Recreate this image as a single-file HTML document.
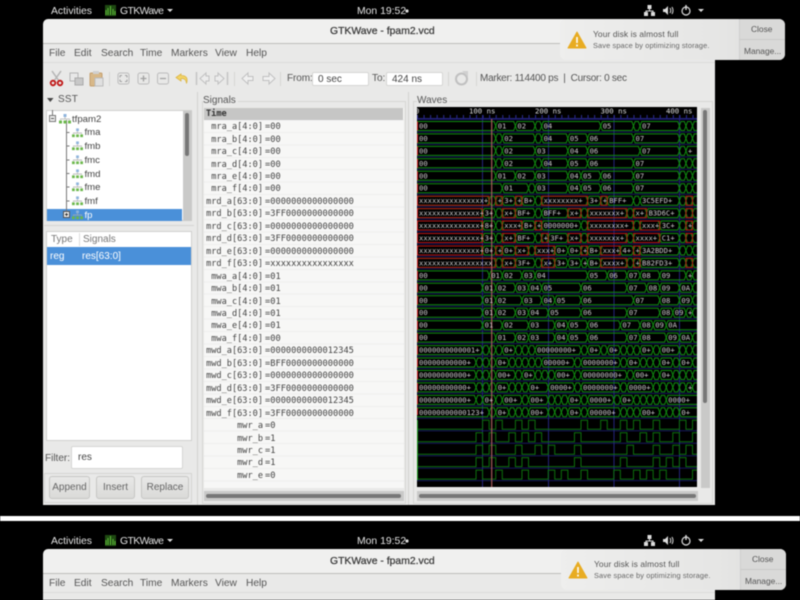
<!DOCTYPE html>
<html><head><meta charset="utf-8"><title>GTKWave</title>
<style>
html,body{margin:0;padding:0;background:#000;width:800px;height:600px;overflow:hidden}
#all{position:absolute;left:0;top:0;width:800px;height:600px;overflow:hidden;filter:blur(.5px);font-family:"Liberation Sans",sans-serif;color:#444}
.a{position:absolute;white-space:pre}
.h{position:absolute;left:0;width:800px;height:70px}
.mono{font-family:"DejaVu Sans Mono","Liberation Mono",monospace}
.menu{font-size:10.2px;top:48px;color:#555}
.tb{color:#e2e2e2;font-size:10.4px;top:5.5px}
.ent{background:#fff;border:1px solid #d6d6d4;border-radius:2px;box-sizing:border-box;color:#444}
.btn{background:linear-gradient(#e8e8e7,#dadad8);border:1px solid #c6c6c4;border-radius:3px;box-sizing:border-box;text-align:center;font-size:10px;line-height:21px;color:#666}
.tree{font-size:9.6px;color:#444}
svg{position:absolute;overflow:visible}
#w path,#w use,#w rect{vector-effect:non-scaling-stroke}
#w{fill:none;stroke:#108c10;stroke-width:1}
.m{transform:matrix(1,0,0,-1,0,9)}
.r{stroke:#b81414}
.t{font-family:"DejaVu Sans Mono","Liberation Mono",monospace;font-size:7.2px;fill:#c8c8c8;stroke:none}
</style></head><body><div id="all">

<svg width="0" height="0" style="position:absolute">
<symbol id="ti" viewBox="0 0 12 10"><rect x="4.5" y="0" width="3" height="3" fill="#8fb4dc"/><path d="M6 3V5M1.5 6V5H10.5V6" stroke="#aaa" fill="none" stroke-width=".7"/><rect x="0" y="6.5" width="3" height="3" fill="#6cb84c"/><rect x="4.5" y="6.5" width="3" height="3" fill="#6cb84c"/><rect x="9" y="6.5" width="3" height="3" fill="#6cb84c"/></symbol>
</svg>

<!-- first header -->
<div class="h" style="top:0">
<div class="a tb" style="left:51px">Activities</div>
<svg style="left:105px;top:5px" width="11" height="11"><rect width="11" height="11" fill="#1f4a12"/><path d="M1 10V5M3 10V3M5.5 10V1M8 10V4M10 10V6" stroke="#5fbf3a" stroke-width="1"/></svg>
<div class="a tb" style="left:120px;letter-spacing:-.6px">GTKWave</div>
<svg style="left:167px;top:9px" width="6" height="3"><path d="M0 0H6L3 3z" fill="#ddd"/></svg>
<div class="a tb" style="left:357px">Mon 19:52</div>
<svg style="left:405px;top:9px" width="4" height="4"><circle cx="2" cy="2" r="1.6" fill="#ddd"/></svg>
<svg style="left:644px;top:5px" width="62" height="12"><g fill="#ddd"><rect x="3.5" y="0" width="4" height="4"/><rect x="0" y="7" width="4" height="4"/><rect x="7" y="7" width="4" height="4"/></g><path d="M5.5 4V6M2 7V6H9V7" stroke="#ddd" fill="none"/><path d="M19 4h2l3-3v9l-3-3h-2z" fill="#ddd"/><path d="M26 3q1.5 2.5 0 5M28 2q2 3.5 0 7" stroke="#ddd" fill="none"/><circle cx="42" cy="6" r="4" stroke="#ddd" fill="none" stroke-width="1.2"/><path d="M42 0V5" stroke="#ddd" stroke-width="1.4"/><path d="M54 4H60L57 7z" fill="#ddd"/></svg>
<div class="a" style="left:43px;top:19px;width:672px;height:60px;background:#f0f0ef;border-radius:5px 5px 0 0"></div>
<div class="a" style="left:43px;top:43px;width:672px;height:1px;background:#bdbdbb"></div>
<div class="a" style="left:43px;top:44px;width:672px;height:30px;background:#e9e9e8"></div>
<div class="a" style="left:43px;top:62px;width:672px;height:1px;background:#dcdcda"></div>
<div class="a" style="left:330px;top:25.5px;font-size:10.4px;color:#3a3a3a;-webkit-text-stroke:.25px #3a3a3a">GTKWave - fpam2.vcd</div>
<div class="a menu" style="left:49px;top:48px">File</div><div class="a menu" style="left:74px">Edit</div><div class="a menu" style="left:101px">Search</div><div class="a menu" style="left:140px">Time</div><div class="a menu" style="left:171px">Markers</div><div class="a menu" style="left:215px">View</div><div class="a menu" style="left:246px">Help</div>
<div class="a" style="left:560px;top:19px;width:225px;height:41px;background:linear-gradient(90deg,#eeeeed,#e6e6e5 70%,#dddddc);border-radius:6px"></div>
<div class="a" style="left:739px;top:19px;width:46px;height:41px;background:#d9d9d8;border-radius:0 6px 6px 0;border-left:1px solid #cfcfce;box-sizing:border-box"></div>
<div class="a" style="left:739px;top:39px;width:46px;height:1px;background:#cacac9"></div>
<svg style="left:567px;top:31px" width="20" height="18"><path d="M10 1L19 17H1z" fill="#e8ac22" stroke="#e8ac22" stroke-linejoin="round"/><path d="M10 6V12M10 13.5V15.5" stroke="#fff" stroke-width="1.6"/></svg>
<div class="a" style="left:593px;top:29px;font-size:8.4px;color:#555;letter-spacing:.12px">Your disk is almost full</div>
<div class="a" style="left:593px;top:41px;font-size:7.4px;color:#666;letter-spacing:.12px">Save space by optimizing storage.</div>
<div class="a" style="left:751px;top:24px;font-size:8.4px;color:#555">Close</div>
<div class="a" style="left:744px;top:46px;font-size:8.4px;color:#555">Manage...</div>
</div>

<!-- main window body -->
<div class="a" style="left:43px;top:74px;width:672px;height:431px;background:#e9e9e8"></div>

<!-- toolbar -->
<svg style="left:0;top:0" width="800" height="100">
<path d="M52 71L59 81M61 71L54 81" stroke="#b4b4b4" stroke-width="1.5" fill="none"/>
<circle cx="53" cy="83" r="2.3" fill="none" stroke="#c01515" stroke-width="1.8"/><circle cx="60" cy="83" r="2.3" fill="none" stroke="#c01515" stroke-width="1.8"/>
<rect x="70" y="73" width="8" height="8" fill="#e8e8e8" stroke="#b4b4b4"/><rect x="75" y="78" width="8" height="7" fill="#c8c8c8" stroke="#aaa"/>
<rect x="90" y="73" width="12" height="13" rx="1" fill="#d8b888" stroke="#c4a070"/><rect x="93" y="71" width="6" height="3" fill="#d0d0d0"/><rect x="95" y="78" width="8" height="8" fill="#e0e0e0" stroke="#bbb"/>
<path d="M109.5 72V86M234.5 72V86M280.5 72V86M448.5 72V86M476.5 72V86" stroke="#d6d6d4"/>
<g fill="#e8e8e7" stroke="#bcbcbc"><rect x="118" y="73" width="11" height="11" rx="2"/><rect x="138" y="73" width="11" height="11" rx="2"/><rect x="157.5" y="73" width="11" height="11" rx="2"/></g>
<path d="M120 75.5h2M120 75.5v2M127 75.5h-2M127 75.5v2M120 81.5h2M120 81.5v-2M127 81.5h-2M127 81.5v-2" stroke="#a0a0a0" fill="none"/>
<path d="M140.5 78.5h6M143.5 75.5v6M160 78.5h6" stroke="#a0a0a0" stroke-width="1.3" fill="none"/>
<path d="M181 74L176 77.5L181 81V78.5Q186 78 186.5 83.5Q189 75.5 181 75.5z" fill="#f2d468" stroke="#dcb440" stroke-width=".8"/>
<path d="M196.5 72V85" stroke="#c4c4c4" stroke-width="1.5"/><path d="M200 78.5L206 73V76H209V81H206V84z" fill="#ececec" stroke="#c0c0c0"/>
<path d="M227.5 72V85" stroke="#c4c4c4" stroke-width="1.5"/><path d="M224 78.5L218 73V76H215V81H218V84z" fill="#ececec" stroke="#c0c0c0"/>
<path d="M242 78.5L248 73V76.5H253V80.5H248V84z" fill="#f0f0f0" stroke="#c0c0c0"/>
<path d="M275 78.5L269 73V76.5H263V80.5H269V84z" fill="#f0f0f0" stroke="#c0c0c0"/>
<circle cx="461.5" cy="79" r="5.5" fill="none" stroke="#c0c0c0" stroke-width="2"/><path d="M462 71H468V77z" fill="#d0d0d0"/>
</svg>
<div class="a" style="left:287px;top:73px;font-size:10px;color:#555;letter-spacing:-.1px">From:</div>
<div class="a ent" style="left:312px;top:72px;width:57px;height:14px;font-size:10px;line-height:13px;padding-left:5px">0 sec</div>
<div class="a" style="left:372px;top:73px;font-size:10px;color:#555">To:</div>
<div class="a ent" style="left:386px;top:72px;width:57px;height:14px;font-size:10px;line-height:13px;padding-left:5px">424 ns</div>
<div class="a" style="left:480px;top:73px;font-size:10px;color:#555;letter-spacing:-.26px">Marker: 114400 ps  |  Cursor: 0 sec</div>

<!-- SST -->
<svg style="left:47px;top:98px" width="7" height="4"><path d="M0 0H6.5L3.25 4z" fill="#444"/></svg>
<div class="a" style="left:58px;top:93.5px;font-size:10px;color:#555;letter-spacing:.2px">SST</div>
<div class="a" style="left:46px;top:110px;width:146px;height:111px;background:#fff;border:1px solid #d0d0ce;box-sizing:border-box"></div>
<div class="a" style="left:183px;top:111px;width:9px;height:110px;background:#c9c9c8"></div>
<div class="a" style="left:185px;top:113px;width:4px;height:43px;background:#777;border-radius:2px"></div>
<div class="a" style="left:47px;top:209px;width:135px;height:12px;background:#4a90d9"></div>
<svg style="left:46px;top:110px" width="60" height="111"><path d="M6.5 0V5M20.5 10V101M20.5 22.5h3M20.5 36h3M20.5 50h3M20.5 63.500h3M20.5 77h3M20.5 91h3" stroke="#777" fill="none"/><rect x="3.5" y="5.5" width="6" height="6" fill="#eee" stroke="#777"/><path d="M5 8.5h3" stroke="#555"/><rect x="17.5" y="101.5" width="6" height="6" fill="#eee" stroke="#555"/><path d="M19 104.5h3M20.5 103v3" stroke="#333"/></svg>
<svg style="left:59px;top:114px" width="12" height="10"><use href="#ti"/></svg>
<svg style="left:72px;top:128px" width="11" height="10"><use href="#ti"/></svg>
<svg style="left:72px;top:141px" width="11" height="10"><use href="#ti"/></svg>
<svg style="left:72px;top:155px" width="11" height="10"><use href="#ti"/></svg>
<svg style="left:72px;top:169px" width="11" height="10"><use href="#ti"/></svg>
<svg style="left:72px;top:182px" width="11" height="10"><use href="#ti"/></svg>
<svg style="left:72px;top:196px" width="11" height="10"><use href="#ti"/></svg>
<svg style="left:72px;top:210px" width="11" height="10"><use href="#ti"/></svg>
<div class="a tree" style="left:72px;top:113.5px">tfpam2</div>
<div class="a tree" style="left:84.5px;top:127px">fma</div>
<div class="a tree" style="left:84.5px;top:141px">fmb</div>
<div class="a tree" style="left:84.5px;top:155px">fmc</div>
<div class="a tree" style="left:84.5px;top:168.5px">fmd</div>
<div class="a tree" style="left:84.5px;top:182px">fme</div>
<div class="a tree" style="left:84.5px;top:196px">fmf</div>
<div class="a tree" style="left:84.5px;top:209.5px;color:#fff">fp</div>
<div class="a" style="left:44px;top:225px;width:150px;height:1px;background:#d4d4d2"></div>

<!-- Type/Signals list -->
<div class="a" style="left:46px;top:231px;width:146px;height:210px;background:#fff;border:1px solid #d0d0ce;box-sizing:border-box"></div>
<div class="a" style="left:79px;top:233px;width:1px;height:13px;background:#ddd"></div>
<div class="a" style="left:51px;top:234px;font-size:10px;color:#777">Type</div>
<div class="a" style="left:83px;top:234px;font-size:10px;color:#777">Signals</div>
<div class="a" style="left:47px;top:247px;width:144px;height:18px;background:#4a90d9"></div>
<div class="a" style="left:50px;top:251px;font-size:10px;color:#fff">reg</div>
<div class="a" style="left:82px;top:251px;font-size:10px;color:#fff">res[63:0]</div>
<div class="a" style="left:45px;top:452.5px;font-size:10px;color:#555">Filter:</div>
<div class="a ent" style="left:71px;top:446px;width:112px;height:23px;font-size:10px;line-height:22px;padding-left:6px">res</div>
<div class="a" style="left:44px;top:473px;width:148px;height:30px;border:1px solid #d4d4d2;box-sizing:border-box"></div>
<div class="a btn" style="left:49px;top:476px;width:41px;height:23px">Append</div>
<div class="a btn" style="left:96px;top:476px;width:39px;height:23px">Insert</div>
<div class="a btn" style="left:141px;top:476px;width:48px;height:23px">Replace</div>
<div class="a" style="left:197px;top:92px;width:1px;height:413px;background:#d2d2d0"></div>

<!-- Signals -->
<div class="a" style="left:202px;top:101px;width:204px;height:403px;border:1px solid #d6d6d4;box-sizing:border-box"></div>
<div class="a" style="left:203px;top:94.5px;font-size:10px;color:#555;background:#e9e9e8;padding-right:2px">Signals</div>
<div class="a" style="left:204px;top:108px;width:200px;height:380px;background:repeating-linear-gradient(#f7f7f6 0,#f7f7f6 11.45px,#eeeeed 11.45px,#eeeeed 12.45px)"></div>
<div class="a" style="left:204px;top:108px;width:199px;height:12px;background:#c6c6c5"></div>
<div class="a mono" style="left:206px;top:108px;font-size:8.6px;line-height:12.45px;color:#333;font-weight:bold">Time</div>
<div class="a mono" style="left:204px;top:121.2px;width:59px;text-align:right;font-size:8.6px;line-height:12.45px;color:#444">mra_a[4:0]
mra_b[4:0]
mra_c[4:0]
mra_d[4:0]
mra_e[4:0]
mra_f[4:0]
mrd_a[63:0]
mrd_b[63:0]
mrd_c[63:0]
mrd_d[63:0]
mrd_e[63:0]
mrd_f[63:0]
mwa_a[4:0]
mwa_b[4:0]
mwa_c[4:0]
mwa_d[4:0]
mwa_e[4:0]
mwa_f[4:0]
mwd_a[63:0]
mwd_b[63:0]
mwd_c[63:0]
mwd_d[63:0]
mwd_e[63:0]
mwd_f[63:0]
mwr_a
mwr_b
mwr_c
mwr_d
mwr_e</div>
<div class="a mono" style="left:265px;top:121.2px;font-size:8.7px;line-height:12.45px;color:#444">=00
=00
=00
=00
=00
=00
=0000000000000000
=3FF0000000000000
=0000000000000000
=3FF0000000000000
=0000000000000000
=xxxxxxxxxxxxxxxx
=01
=01
=01
=01
=01
=00
=0000000000012345
=BFF0000000000000
=0000000000000000
=3FF0000000000000
=0000000000012345
=3FF0000000000000
=0
=1
=1
=1
=0</div>
<div class="a" style="left:204px;top:491px;width:200px;height:10px;background:#c9c9c8"></div>
<div class="a" style="left:206px;top:494px;width:195px;height:4px;background:#777;border-radius:2px"></div>
<div class="a" style="left:408px;top:92px;width:1px;height:413px;background:#d2d2d0"></div>

<!-- Waves frame -->
<div class="a" style="left:413px;top:101px;width:300px;height:403px;border:1px solid #d6d6d4;box-sizing:border-box"></div>
<div class="a" style="left:417px;top:94.5px;font-size:10px;color:#555;background:#e9e9e8;padding-right:2px">Waves</div>
<div class="a" style="left:417px;top:107px;width:280px;height:380px;background:#000"></div>
<div class="a" style="left:701px;top:108px;width:9px;height:380px;background:#c9c9c8"></div>
<div class="a" style="left:703px;top:110px;width:4px;height:293px;background:#777;border-radius:2px"></div>
<div class="a" style="left:417px;top:491px;width:281px;height:10px;background:#c9c9c8"></div>
<div class="a" style="left:419px;top:494px;width:277px;height:4px;background:#777;border-radius:2px"></div>

<svg style="left:0;top:0;clip-path:inset(107px 103px 113px 417px)" width="800" height="600">
<path d="M417 119.5H697M417 132H697M417 144.4H697M417 156.9H697M417 169.3H697M417 181.8H697M417 194.2H697M417 206.7H697M417 219.1H697M417 231.6H697M417 244H697M417 256.5H697M417 268.9H697M417 281.4H697M417 293.8H697M417 306.3H697M417 318.7H697M417 331.2H697M417 343.6H697M417 356.1H697M417 368.5H697M417 381H697M417 393.4H697M417 405.9H697M417 418.3H697M417 430.8H697M417 443.2H697M417 455.7H697M417 468.1H697M417 480.6H697" stroke="#16165e"/>
<path d="M482.5 115V487M548.5 115V487M614 115V487M679.5 115V487" stroke="#24247c"/>
<path d="M417 116.5H697" stroke="#2c2c96" stroke-width="3" stroke-dasharray="1 5.56"/>
<path d="M417 118.5H697" stroke="#24247c"/>
<text class="t" y="113.5" style="font-size:7.3px;fill:#ddd"><tspan x="415">0</tspan><tspan x="469">100 ns</tspan><tspan x="535">200 ns</tspan><tspan x="600.5">300 ns</tspan><tspan x="666">400 ns</tspan></text>

<g id="w" transform="translate(417 0) scale(6.56 1)">
<g transform="translate(0 121.5)"><path id="p1" d="M0 0H11.75l.5 9H14.75l.5-9H17.75l.5 9H18.75l.5-9H27.75l.5 9H32.75l.5-9H33.75l.5 9H39.75l.5-9H40.75l.5 9H41.75l.5-9H43"/><use href="#p1" class="m"/></g>
<g transform="translate(0 133.9)"><path id="p2" d="M0 0H11.75l.5 9H12.75l.5-9H17.75l.5 9H18.75l.5-9H22.75l.5 9H25.75l.5-9H32.75l.5 9H39.75l.5-9H40.75l.5 9H41.75l.5-9H43"/><use href="#p2" class="m"/></g>
<g transform="translate(0 146.4)"><path id="p3" d="M0 0H11.75l.5 9H12.75l.5-9H17.75l.5 9H22.75l.5-9H25.75l.5 9H33.75l.5-9H39.75l.5 9H40.75l.5-9H43"/><use href="#p3" class="m"/></g>
<g transform="translate(0 158.8)"><path id="p4" d="M0 0H11.75l.5 9H12.75l.5-9H17.75l.5 9H18.75l.5-9H22.75l.5 9H25.75l.5-9H32.75l.5 9H39.75l.5-9H40.75l.5 9H41.75l.5-9H43"/><use href="#p4" class="m"/></g>
<g transform="translate(0 171.3)"><path id="p5" d="M0 0H11.75l.5 9H14.75l.5-9H17.75l.5 9H22.75l.5-9H24.75l.5 9H27.75l.5-9H32.75l.5 9H39.75l.5-9H40.75l.5 9H41.75l.5-9H43"/><use href="#p5" class="m"/></g>
<g transform="translate(0 183.7)"><path id="p6" d="M0 0H12.75l.5 9H16.75l.5-9H17.75l.5 9H22.75l.5-9H24.75l.5 9H27.75l.5-9H32.75l.5 9H39.75l.5-9H40.75l.5 9H41.75l.5-9H43"/><use href="#p6" class="m"/></g>

<g transform="translate(0 196.2)"><path id="p7" d="M0 0H10.75l.5 9H11.75l.5-9H12.75l.5 9H14.75l.5-9H15.75l.5 9H17.75l.5-9H18.75l.5 9H25.75l.5-9H27.75l.5 9H28.75l.5-9H32.75l.5 9H33.75l.5-9H39.75l.5 9H40.75l.5-9H41.75l.5 9H43"/><use href="#p7" class="m"/><g class="r"><rect width="11" height="9"/><rect x="12" width="1" height="9"/><rect x="15" width="1" height="9"/><rect x="19" width="7" height="9"/><rect x="28" width="1" height="9"/><rect x="41" width="1" height="9"/></g></g>
<g transform="translate(0 208.6)"><path id="p8" d="M0 0H9.75l.5 9H11.75l.5-9H12.75l.5 9H14.75l.5-9H17.75l.5 9H18.75l.5-9H22.75l.5 9H24.75l.5-9H25.75l.5 9H31.75l.5-9H32.75l.5 9H34.75l.5-9H39.75l.5 9H40.75l.5-9H41.75l.5 9H43"/><use href="#p8" class="m"/><g class="r"><rect width="10" height="9"/><rect x="13" width="2" height="9"/><rect x="23" width="2" height="9"/><rect x="26" width="6" height="9"/><rect x="33" width="2" height="9"/><rect x="41" width="1" height="9"/></g></g>
<g transform="translate(0 221)"><path id="p9" d="M0 0H9.75l.5 9H11.75l.5-9H12.75l.5 9H15.75l.5-9H17.75l.5 9H18.75l.5-9H24.75l.5 9H25.75l.5-9H32.75l.5 9H33.75l.5-9H36.75l.5 9H39.75l.5-9H40.75l.5 9H41.75l.5-9H43"/><use href="#p9" class="m"/><g class="r"><rect width="10" height="9"/><rect x="13" width="3" height="9"/><rect x="18" width="1" height="9"/><rect x="26" width="7" height="9"/><rect x="34" width="3" height="9"/><rect x="41" width="1" height="9"/></g></g>
<g transform="translate(0 233.5)"><path id="p10" d="M0 0H9.75l.5 9H11.75l.5-9H12.75l.5 9H14.75l.5-9H17.75l.5 9H18.75l.5-9H19.75l.5 9H22.75l.5-9H24.75l.5 9H25.75l.5-9H31.75l.5 9H32.75l.5-9H36.75l.5 9H39.75l.5-9H40.75l.5 9H41.75l.5-9H43"/><use href="#p10" class="m"/><g class="r"><rect width="10" height="9"/><rect x="13" width="2" height="9"/><rect x="19" width="1" height="9"/><rect x="23" width="2" height="9"/><rect x="26" width="6" height="9"/><rect x="33" width="4" height="9"/><rect x="41" width="1" height="9"/></g></g>
<g transform="translate(0 246)"><path id="p11" d="M0 0H9.75l.5 9H11.75l.5-9H12.75l.5 9H14.75l.5-9H16.75l.5 9H17.75l.5-9H20.75l.5 9H22.75l.5-9H24.75l.5 9H25.75l.5-9H27.75l.5 9H30.75l.5-9H32.75l.5 9H33.75l.5-9H39.75l.5 9H40.75l.5-9H41.75l.5 9H43"/><use href="#p11" class="m"/><g class="r"><rect width="10" height="9"/><rect x="12" width="1" height="9"/><rect x="15" width="2" height="9"/><rect x="18" width="3" height="9"/><rect x="25" width="1" height="9"/><rect x="28" width="3" height="9"/><rect x="33" width="1" height="9"/></g></g>
<g transform="translate(0 258.4)"><path id="p12" d="M0 0H11.75l.5 9H12.75l.5-9H14.75l.5 9H17.75l.5-9H18.75l.5 9H20.75l.5-9H22.75l.5 9H24.75l.5-9H25.75l.5 9H27.75l.5-9H31.75l.5 9H32.75l.5-9H33.75l.5 9H39.75l.5-9H40.75l.5 9H41.75l.5-9H43"/><use href="#p12" class="m"/><g class="r"><rect width="12" height="9"/><rect x="13" width="2" height="9"/><rect x="19" width="2" height="9"/><rect x="28" width="4" height="9"/><rect x="33" width="1" height="9"/><rect x="41" width="1" height="9"/></g></g>

<g transform="translate(0 270.9)"><path id="p13" d="M0 0H10.75l.5 9H12.75l.5-9H15.75l.5 9H17.75l.5-9H25.75l.5 9H28.75l.5-9H31.75l.5 9H33.75l.5-9H36.75l.5 9H40.75l.5-9H41.75l.5 9H43"/><use href="#p13" class="m"/></g>
<g transform="translate(0 283.3)"><path id="p14" d="M0 0H9.75l.5 9H11.75l.5-9H14.75l.5 9H16.75l.5-9H18.75l.5 9H24.75l.5-9H31.75l.5 9H34.75l.5-9H36.75l.5 9H39.75l.5-9H41.75l.5 9H43"/><use href="#p14" class="m"/></g>
<g transform="translate(0 295.8)"><path id="p15" d="M0 0H9.75l.5 9H11.75l.5-9H15.75l.5 9H18.75l.5-9H20.75l.5 9H24.75l.5-9H32.75l.5 9H36.75l.5-9H39.75l.5 9H41.75l.5-9H43"/><use href="#p15" class="m"/></g>
<g transform="translate(0 308.2)"><path id="p16" d="M0 0H9.75l.5 9H11.75l.5-9H14.75l.5 9H16.75l.5-9H19.75l.5 9H24.75l.5-9H31.75l.5 9H36.75l.5-9H38.75l.5 9H40.75l.5-9H41.75l.5 9H43"/><use href="#p16" class="m"/></g>
<g transform="translate(0 320.7)"><path d="M0 0H9.75l.5 9H12.75l.5-9H16.75l.5 9H20.75l.5-9H22.75l.5 9H25.75l.5-9H30.75l.5 9H33.75l.5-9H35.75l.5 9H37.75l.5-9H43M38.25 9H43"/><path d="M0 9H9.75l.5-9H12.75l.5 9H16.75l.5-9H20.75l.5 9H22.75l.5-9H25.75l.5 9H30.75l.5-9H33.75l.5 9H35.75l.5-9H37.75l.5 9"/></g>
<g transform="translate(0 333.1)"><path id="p18" d="M0 0H11.75l.5 9H14.75l.5-9H16.75l.5 9H20.75l.5-9H22.75l.5 9H25.75l.5-9H31.75l.5 9H33.75l.5-9H37.75l.5 9H39.75l.5-9H41.75l.5 9H43"/><use href="#p18" class="m"/></g>

<g transform="translate(0 345.6)"><path id="p19" d="M0 0H9.75l.5 9H10.75l.5-9H11.75l.5 9H12.75l.5-9H14.75l.5 9H15.75l.5-9H16.75l.5 9H17.75l.5-9H24.75l.5 9H25.75l.5-9H27.75l.5 9H28.75l.5-9H30.75l.5 9H31.75l.5-9H32.75l.5 9H33.75l.5-9H35.75l.5 9H36.75l.5-9H39.75l.5 9H40.75l.5-9H41.75l.5 9H43"/><use href="#p19" class="m"/></g>
<g transform="translate(0 358)"><path id="p20" d="M0 0H8.75l.5 9H9.75l.5-9H10.75l.5 9H11.75l.5-9H13.75l.5 9H14.75l.5-9H15.75l.5 9H16.75l.5-9H17.75l.5 9H18.75l.5-9H23.75l.5 9H24.75l.5-9H30.75l.5 9H31.75l.5-9H33.75l.5 9H34.75l.5-9H35.75l.5 9H36.75l.5-9H38.75l.5 9H39.75l.5-9H41.75l.5 9H43"/><use href="#p20" class="m"/></g>
<g transform="translate(0 370.5)"><path id="p21" d="M0 0H8.75l.5 9H9.75l.5-9H10.75l.5 9H11.75l.5-9H14.75l.5 9H15.75l.5-9H17.75l.5 9H18.75l.5-9H19.75l.5 9H20.75l.5-9H23.75l.5 9H24.75l.5-9H31.75l.5 9H32.75l.5-9H35.75l.5 9H36.75l.5-9H38.75l.5 9H39.75l.5-9H40.75l.5 9H41.75l.5-9H43"/><use href="#p21" class="m"/></g>
<g transform="translate(0 382.9)"><path id="p22" d="M0 0H8.75l.5 9H9.75l.5-9H10.75l.5 9H11.75l.5-9H13.75l.5 9H14.75l.5-9H15.75l.5 9H16.75l.5-9H19.75l.5 9H23.75l.5-9H24.75l.5 9H30.75l.5-9H31.75l.5 9H35.75l.5-9H36.75l.5 9H37.75l.5-9H38.75l.5 9H39.75l.5-9H40.75l.5 9H41.75l.5-9H43"/><use href="#p22" class="m"/></g>
<g transform="translate(0 395.4)"><path id="p23" d="M0 0H8.75l.5 9H9.75l.5-9H11.75l.5 9H12.75l.5-9H15.75l.5 9H16.75l.5-9H19.75l.5 9H20.75l.5-9H21.75l.5 9H22.75l.5-9H24.75l.5 9H25.75l.5-9H29.75l.5 9H30.75l.5-9H32.75l.5 9H33.75l.5-9H34.75l.5 9H35.75l.5-9H36.75l.5 9H37.75l.5-9H43"/><use href="#p23" class="m"/></g>
<g transform="translate(0 407.8)"><path id="p24" d="M0 0H10.75l.5 9H11.75l.5-9H13.75l.5 9H14.75l.5-9H15.75l.5 9H16.75l.5-9H19.75l.5 9H20.75l.5-9H21.75l.5 9H22.75l.5-9H24.75l.5 9H25.75l.5-9H30.75l.5 9H31.75l.5-9H32.75l.5 9H33.75l.5-9H36.75l.5 9H37.75l.5-9H38.75l.5 9H39.75l.5-9H43"/><use href="#p24" class="m"/></g>

<g style="stroke:#0d700d">
<path transform="translate(0 420.3)" d="M0 9H10V0H11V9H12V0H13V9H15V0H16V9H17V0H18V9H25V0H26V9H28V0H29V9H31V0H32V9H33V0H34V9H36V0H37V9H40V0H41V9H42V0H43"/>
<path transform="translate(0 432.7)" d="M0 9H9V0H10V9H11V0H12V9H14V0H15V9H16V0H17V9H18V0H19V9H24V0H25V9H31V0H32V9H34V0H35V9H36V0H37V9H39V0H40V9H42V0H43"/>
<path transform="translate(0 445.2)" d="M0 9H9V0H10V9H11V0H12V9H15V0H16V9H18V0H19V9H20V0H21V9H24V0H25V9H32V0H33V9H36V0H37V9H39V0H40V9H41V0H42V9H43"/>
<path transform="translate(0 457.6)" d="M0 9H9V0H10V9H11V0H12V9H14V0H15V9H16V0H17V9H24V0H25V9H31V0H32V9H36V0H37V9H38V0H39V9H40V0H41V9H43"/>
<path transform="translate(0 470.1)" d="M0 9H9V0H10V9H12V0H13V9H16V0H17V9H20V0H21V9H22V0H23V9H25V0H26V9H30V0H31V9H33V0H34V9H35V0H36V9H37V0H38V9H42V0H43"/>
</g>
</g>
<path d="M417.5 121.5V415" stroke="#d02020" stroke-dasharray="9 3.45"/>
<path d="M417.5 420V480" stroke="#1a9a1a"/>
<path d="M491.7 119V487" stroke="#a85a5a" stroke-width="1.2"/>

<g class="t">
<text class="t" y="128.5"><tspan x="419">00</tspan><tspan x="497.7">01</tspan><tspan x="517.4">02</tspan><tspan x="543.6">04</tspan><tspan x="602.7">05</tspan><tspan x="642">07</tspan></text>
<text class="t" y="141"><tspan x="419">00</tspan><tspan x="504.3">02</tspan><tspan x="543.6">04</tspan><tspan x="569.9">05</tspan><tspan x="589.6">06</tspan><tspan x="635.5">07</tspan></text>
<text class="t" y="153.4"><tspan x="419">00</tspan><tspan x="504.3">02</tspan><tspan x="537">03</tspan><tspan x="569.9">04</tspan><tspan x="589.6">06</tspan><tspan x="642">07</tspan><tspan x="688">+</tspan></text>
<text class="t" y="165.8"><tspan x="419">00</tspan><tspan x="504.3">02</tspan><tspan x="543.6">04</tspan><tspan x="569.9">05</tspan><tspan x="589.6">06</tspan><tspan x="635.5">07</tspan></text>
<text class="t" y="178.3"><tspan x="419">00</tspan><tspan x="497.7">01</tspan><tspan x="517.4">02</tspan><tspan x="537">03</tspan><tspan x="569.9">04</tspan><tspan x="583">05</tspan><tspan x="602.7">06</tspan><tspan x="635.5">07</tspan></text>
<text class="t" y="190.7"><tspan x="419">00</tspan><tspan x="504.3">01</tspan><tspan x="537">03</tspan><tspan x="569.9">04</tspan><tspan x="583">05</tspan><tspan x="602.7">06</tspan><tspan x="635.5">07</tspan></text>
<text class="t" y="203.2"><tspan x="419">xxxxxxxxxxxxxxx+</tspan><tspan x="497.7">+</tspan><tspan x="504.3">3+</tspan><tspan x="517.4">+</tspan><tspan x="524">B+</tspan><tspan x="543.6">xxxxxxxx+</tspan><tspan x="589.6">3+</tspan><tspan x="602.7">+</tspan><tspan x="609.2">BFF+</tspan><tspan x="642">3C5EFD+</tspan></text>
<text class="t" y="215.6"><tspan x="419">xxxxxxxxxxxxxx+</tspan><tspan x="484.6">3+</tspan><tspan x="504.3">x+</tspan><tspan x="517.4">BF+</tspan><tspan x="543.6">BFF+</tspan><tspan x="569.9">x+</tspan><tspan x="589.6">xxxxxxx+</tspan><tspan x="635.5">x+</tspan><tspan x="648.6">B3D6C+</tspan></text>
<text class="t" y="228"><tspan x="419">xxxxxxxxxxxxxx+</tspan><tspan x="484.6">8+</tspan><tspan x="504.3">xxx+</tspan><tspan x="524">B+</tspan><tspan x="537">+</tspan><tspan x="543.6">0000000+</tspan><tspan x="589.6">xxxxxxxx+</tspan><tspan x="642">xxx+</tspan><tspan x="661.7">3C+</tspan><tspan x="688">+</tspan></text>
<text class="t" y="240.5"><tspan x="419">xxxxxxxxxxxxxx+</tspan><tspan x="484.6">3+</tspan><tspan x="504.3">x+</tspan><tspan x="517.4">BF+</tspan><tspan x="543.6">+</tspan><tspan x="550.2">3F+</tspan><tspan x="569.9">x+</tspan><tspan x="589.6">xxxxxxx+</tspan><tspan x="635.5">xxxx+</tspan><tspan x="661.7">C1+</tspan></text>
<text class="t" y="253"><tspan x="419">xxxxxxxxxxxxxx+</tspan><tspan x="484.6">0+</tspan><tspan x="497.7">+</tspan><tspan x="504.3">0+</tspan><tspan x="517.4">x+</tspan><tspan x="537">xxx+</tspan><tspan x="556.8">0+</tspan><tspan x="569.9">0+</tspan><tspan x="583">+</tspan><tspan x="589.6">B+</tspan><tspan x="602.7">xxx+</tspan><tspan x="622.4">4+</tspan><tspan x="635.5">+</tspan><tspan x="642">3A2BDD+</tspan></text>
<text class="t" y="265.4"><tspan x="419">xxxxxxxxxxxxxxxxx</tspan><tspan x="504.3">x+</tspan><tspan x="517.4">3F+</tspan><tspan x="543.6">x+</tspan><tspan x="556.8">3+</tspan><tspan x="569.9">3+</tspan><tspan x="583">+</tspan><tspan x="589.6">B+</tspan><tspan x="602.7">xxxx+</tspan><tspan x="635.5">+</tspan><tspan x="642">B82FD3+</tspan></text>
<text class="t" y="277.9"><tspan x="419">00</tspan><tspan x="491.2">01</tspan><tspan x="504.3">02</tspan><tspan x="524">03</tspan><tspan x="537">04</tspan><tspan x="589.6">05</tspan><tspan x="609.2">06</tspan><tspan x="628.9">07</tspan><tspan x="642">08</tspan><tspan x="661.7">09</tspan><tspan x="688">+</tspan></text>
<text class="t" y="290.3"><tspan x="419">00</tspan><tspan x="484.6">01</tspan><tspan x="497.7">02</tspan><tspan x="517.4">03</tspan><tspan x="530.5">04</tspan><tspan x="543.6">05</tspan><tspan x="583">06</tspan><tspan x="628.9">07</tspan><tspan x="648.6">08</tspan><tspan x="661.7">09</tspan><tspan x="681.4">0A</tspan></text>
<text class="t" y="302.8"><tspan x="419">00</tspan><tspan x="484.6">01</tspan><tspan x="497.7">02</tspan><tspan x="524">03</tspan><tspan x="543.6">04</tspan><tspan x="556.8">05</tspan><tspan x="583">06</tspan><tspan x="635.5">07</tspan><tspan x="661.7">08</tspan><tspan x="681.4">09</tspan></text>
<text class="t" y="315.2"><tspan x="419">00</tspan><tspan x="484.6">01</tspan><tspan x="497.7">02</tspan><tspan x="517.4">03</tspan><tspan x="530.5">04</tspan><tspan x="550.2">05</tspan><tspan x="583">06</tspan><tspan x="628.9">07</tspan><tspan x="661.7">08</tspan><tspan x="674.8">09</tspan><tspan x="688">+</tspan></text>
<text class="t" y="327.7"><tspan x="419">00</tspan><tspan x="484.6">01</tspan><tspan x="504.3">02</tspan><tspan x="530.5">03</tspan><tspan x="556.8">04</tspan><tspan x="569.9">05</tspan><tspan x="589.6">06</tspan><tspan x="622.4">07</tspan><tspan x="642">08</tspan><tspan x="655.2">09</tspan><tspan x="668.3">0A</tspan></text>
<text class="t" y="340.1"><tspan x="419">00</tspan><tspan x="497.7">01</tspan><tspan x="517.4">02</tspan><tspan x="530.5">03</tspan><tspan x="556.8">04</tspan><tspan x="569.9">05</tspan><tspan x="589.6">06</tspan><tspan x="628.9">07</tspan><tspan x="642">08</tspan><tspan x="668.3">09</tspan><tspan x="681.4">0A</tspan></text>
<text class="t" y="352.6"><tspan x="419">0000000000001+</tspan><tspan x="504.3">0+</tspan><tspan x="537">00000000+</tspan><tspan x="589.6">0+</tspan><tspan x="609.2">0+</tspan><tspan x="642">0+</tspan><tspan x="661.7">00+</tspan></text>
<text class="t" y="365"><tspan x="419">00000000000+</tspan><tspan x="497.7">0+</tspan><tspan x="543.6">00000+</tspan><tspan x="583">0000000+</tspan><tspan x="628.9">0+</tspan><tspan x="661.7">0+</tspan><tspan x="681.4">0+</tspan></text>
<text class="t" y="377.5"><tspan x="419">00000000000+</tspan><tspan x="497.7">00+</tspan><tspan x="524">0+</tspan><tspan x="556.8">00+</tspan><tspan x="583">00000000+</tspan><tspan x="635.5">00+</tspan><tspan x="661.7">0+</tspan></text>
<text class="t" y="389.9"><tspan x="419">00000000000+</tspan><tspan x="497.7">0+</tspan><tspan x="530.5">0+</tspan><tspan x="550.2">0000+</tspan><tspan x="583">0000000+</tspan><tspan x="628.9">0000+</tspan><tspan x="688">+</tspan></text>
<text class="t" y="402.4"><tspan x="419">00000000000+</tspan><tspan x="484.6">0+</tspan><tspan x="504.3">00+</tspan><tspan x="530.5">00+</tspan><tspan x="569.9">0+</tspan><tspan x="589.6">0000+</tspan><tspan x="622.4">0+</tspan><tspan x="668.3">0000+</tspan></text>
<text class="t" y="414.8"><tspan x="419">00000000000123+</tspan><tspan x="497.7">0+</tspan><tspan x="530.5">00+</tspan><tspan x="569.9">0+</tspan><tspan x="589.6">00000+</tspan><tspan x="642">00+</tspan><tspan x="681.4">0+</tspan></text>
</g>
</svg>

<div class="a" style="left:0;top:505px;width:800px;height:11px;background:#000"></div>
<div class="a" style="left:0;top:516px;width:800px;height:5px;background:#fff"></div>
<div class="a" style="left:0;top:521px;width:800px;height:79px;background:#000"></div>

<!-- second header -->
<div class="h" style="top:530px">
<div class="a tb" style="left:51px">Activities</div>
<svg style="left:105px;top:5px" width="11" height="11"><rect width="11" height="11" fill="#1f4a12"/><path d="M1 10V5M3 10V3M5.5 10V1M8 10V4M10 10V6" stroke="#5fbf3a" stroke-width="1"/></svg>
<div class="a tb" style="left:120px;letter-spacing:-.6px">GTKWave</div>
<svg style="left:167px;top:9px" width="6" height="3"><path d="M0 0H6L3 3z" fill="#ddd"/></svg>
<div class="a tb" style="left:357px">Mon 19:52</div>
<svg style="left:405px;top:9px" width="4" height="4"><circle cx="2" cy="2" r="1.6" fill="#ddd"/></svg>
<svg style="left:644px;top:5px" width="62" height="12"><g fill="#ddd"><rect x="3.5" y="0" width="4" height="4"/><rect x="0" y="7" width="4" height="4"/><rect x="7" y="7" width="4" height="4"/></g><path d="M5.5 4V6M2 7V6H9V7" stroke="#ddd" fill="none"/><path d="M19 4h2l3-3v9l-3-3h-2z" fill="#ddd"/><path d="M26 3q1.5 2.5 0 5M28 2q2 3.5 0 7" stroke="#ddd" fill="none"/><circle cx="42" cy="6" r="4" stroke="#ddd" fill="none" stroke-width="1.2"/><path d="M42 0V5" stroke="#ddd" stroke-width="1.4"/><path d="M54 4H60L57 7z" fill="#ddd"/></svg>
<div class="a" style="left:43px;top:19px;width:672px;height:51px;background:#f0f0ef;border-radius:5px 5px 0 0"></div>
<div class="a" style="left:43px;top:43px;width:672px;height:1px;background:#bdbdbb"></div>
<div class="a" style="left:43px;top:44px;width:672px;height:26px;background:#e9e9e8"></div>
<div class="a" style="left:43px;top:62px;width:672px;height:1px;background:#dcdcda"></div>
<div class="a" style="left:330px;top:25.5px;font-size:10.4px;color:#3a3a3a;-webkit-text-stroke:.25px #3a3a3a">GTKWave - fpam2.vcd</div>
<div class="a menu" style="left:49px">File</div><div class="a menu" style="left:74px">Edit</div><div class="a menu" style="left:101px">Search</div><div class="a menu" style="left:140px">Time</div><div class="a menu" style="left:171px">Markers</div><div class="a menu" style="left:215px">View</div><div class="a menu" style="left:246px">Help</div>
<div class="a" style="left:561px;top:19px;width:225px;height:41px;background:linear-gradient(90deg,#eeeeed,#e6e6e5 70%,#dddddc);border-radius:6px"></div>
<div class="a" style="left:740px;top:19px;width:46px;height:41px;background:#d9d9d8;border-radius:0 6px 6px 0;border-left:1px solid #cfcfce;box-sizing:border-box"></div>
<div class="a" style="left:740px;top:39px;width:46px;height:1px;background:#cacac9"></div>
<svg style="left:568px;top:31px" width="20" height="18"><path d="M10 1L19 17H1z" fill="#e8ac22" stroke="#e8ac22" stroke-linejoin="round"/><path d="M10 6V12M10 13.5V15.5" stroke="#fff" stroke-width="1.6"/></svg>
<div class="a" style="left:594px;top:29px;font-size:8.4px;color:#555;letter-spacing:.12px">Your disk is almost full</div>
<div class="a" style="left:594px;top:41px;font-size:7.4px;color:#666;letter-spacing:.12px">Save space by optimizing storage.</div>
<div class="a" style="left:752px;top:24px;font-size:8.4px;color:#555">Close</div>
<div class="a" style="left:745px;top:46px;font-size:8.4px;color:#555">Manage...</div>
</div>

</div></body></html>
